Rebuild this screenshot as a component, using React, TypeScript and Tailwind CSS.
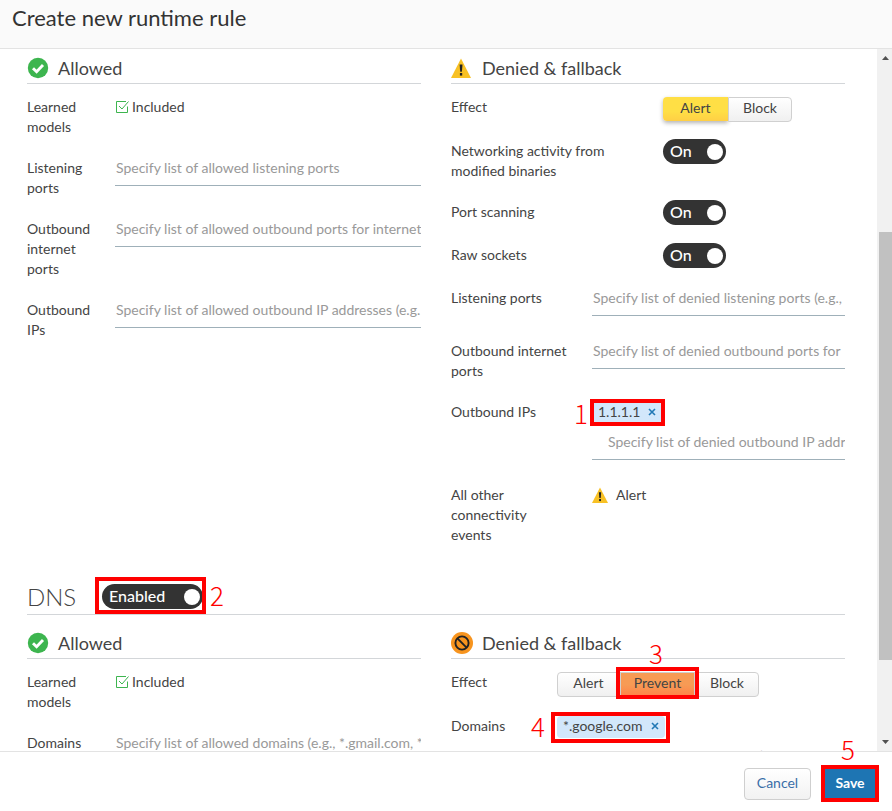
import React, { useId, useState } from "react";

const DIGIT = "pointer-events-none absolute text-[26px] leading-[30px] font-light text-[#ff0000] font-['Noto_Sans_CJK_KR',sans-serif]";

function Callout({ n, box, digit }: { n: number; box: string; digit: string }) {
  return (
    <>
      <span className={`pointer-events-none absolute z-10 border-4 border-[#ff0000] ${box}`} />
      <span className={`${DIGIT} z-10 ${digit}`}>{n}</span>
    </>
  );
}

function CheckCircle() {
  return (
    <svg viewBox="0 0 22 22" className="size-[22px]" aria-hidden="true">
      <circle cx="11" cy="11" r="10.2" fill="#3db54f" />
      <path d="M6 11.2l3.6 3.5 6.4-6.6" fill="none" stroke="#fff" strokeWidth="2.9" />
    </svg>
  );
}

function Warning({ className }: { className: string }) {
  return (
    <svg viewBox="0 0 20 20" className={className} aria-hidden="true">
      <path d="M10 0.5L20 20H0z" fill="#f8c125" />
      <path d="M8.6 6.5h2.9l-.6 7.2H9.2z" fill="#222" />
      <rect x="8.9" y="15" width="2.3" height="2.6" fill="#222" />
    </svg>
  );
}

function Prohibited() {
  return (
    <svg viewBox="0 0 22 22" className="size-[22px]" aria-hidden="true">
      <circle cx="11" cy="11" r="11" fill="#f7941e" />
      <circle cx="11" cy="11" r="6.6" fill="none" stroke="#222" strokeWidth="1.9" />
      <path d="M6.4 6.4l9.2 9.2" stroke="#222" strokeWidth="1.9" />
    </svg>
  );
}

function Included() {
  return (
    <div className="flex h-5 items-center gap-[3px]">
      <svg viewBox="0 0 14 14" className="size-[14px]" fill="none" stroke="#3db54f" aria-hidden="true">
        <path d="M11 1.5H1.5v11h11V6.500" />
        <path d="M4 6l3 3 6.500-7.500" />
      </svg>
      <span>Included</span>
    </div>
  );
}

function ColumnHeader({ icon, children }: { icon: React.ReactNode; children: React.ReactNode }) {
  return (
    <h3 className="mb-[13px] flex h-[44px] items-center border-b border-[#d3d6d9] pt-3 text-lg leading-6">
      <span className="flex w-[31px]">{icon}</span>
      {children}
    </h3>
  );
}

function Row({ label, width, htmlFor, children }: { label: string; width: string; htmlFor?: string; children: React.ReactNode }) {
  return (
    <div className="flex">
      <div className={`shrink-0 ${width}`}>
        {htmlFor ? <label htmlFor={htmlFor} className="block">{label}</label> : label}
      </div>
      <div className="min-w-0 flex-1">{children}</div>
    </div>
  );
}

const INPUT = "block h-7 w-full border-b border-[#9fb0b9] bg-transparent pb-[9px] leading-5 outline-none placeholder:text-[#999]";

function FieldRow({ label, width, placeholder }: { label: string; width: string; placeholder: string }) {
  const id = useId();
  return (
    <Row label={label} width={width} htmlFor={id}>
      <div className="h-8">
        <input id={id} type="text" placeholder={placeholder} className={`${INPUT} pl-px`} />
      </div>
    </Row>
  );
}

function Switch({ text, name, width }: { text: string; name: string; width: string }) {
  const [on, setOn] = useState(true);
  return (
    <button
      type="button"
      role="switch"
      aria-checked={on}
      aria-label={name}
      onClick={() => setOn(!on)}
      className={`flex h-[25px] items-center justify-between rounded-full bg-[#333] pr-[3px] pl-[7px] text-base leading-5 font-medium text-white ${width}`}
    >
      <span className="pb-px">{text}</span>
      <span className="size-4 rounded-full bg-white" />
    </button>
  );
}

function SwitchRow({ label }: { label: string }) {
  return (
    <Row label={label} width="w-[212px] pr-10">
      <div className="-mt-[2px] h-6">
        <Switch text="On" name={label} width="w-[63px]" />
      </div>
    </Row>
  );
}

function Tag({ children }: { children: string }) {
  return (
    <span className="flex h-[22px] items-center gap-2 rounded-sm bg-[#d2e7fb] px-[6px] pb-[3px]">
      {children}
      <button type="button" aria-label={`Remove ${children}`} className="flex">
        <svg viewBox="0 0 8 8" className="size-2" stroke="#2178b5" strokeWidth="1.6" aria-hidden="true">
          <path d="M1 1l6 6M7 1L1 7" />
        </svg>
      </button>
    </span>
  );
}

const SEGMENT = "flex h-[25px] items-center justify-center border border-[#d0d0d0] bg-linear-to-b from-white to-[#f0f0f0] pb-[3px]";

export default function App() {
  const ipsId = useId();
  const domainsId = useId();
  return (
    <div className="flex h-screen flex-col bg-white font-['Lato',sans-serif] text-sm leading-5 text-[#444]">
      <header className="flex h-[49px] shrink-0 items-center border-b border-[#e3e3e3] bg-[#fafafa] px-3 pb-3">
        <h1 className="text-[22px] text-[#333]">Create new runtime rule</h1>
      </header>

      <div className="flex min-h-0 flex-1">
        <main className="min-w-0 flex-1 overflow-hidden pr-8 pl-[27px]">
          <section className="-mt-[9px] grid grid-cols-2 gap-[30px]">
            <div>
              <ColumnHeader icon={<CheckCircle />}>Allowed</ColumnHeader>
              <div className="flex flex-col gap-[21px]">
                <Row label="Learned models" width="w-[88px] pr-4"><Included /></Row>
                <FieldRow label="Listening ports" width="w-[88px] pr-4" placeholder="Specify list of allowed listening ports" />
                <FieldRow label="Outbound internet ports" width="w-[88px] pr-4" placeholder="Specify list of allowed outbound ports for internet" />
                <FieldRow label="Outbound IPs" width="w-[88px] pr-4" placeholder="Specify list of allowed outbound IP addresses (e.g." />
              </div>
            </div>

            <div>
              <ColumnHeader icon={<Warning className="size-5" />}>Denied &amp; fallback</ColumnHeader>
              <div className="flex flex-col gap-[21px]">
                <Row label="Effect" width="w-[212px]">
                  <div className="flex h-[23px]">
                    <button type="button" className="flex h-[24px] w-[65px] items-center justify-center rounded-l bg-linear-to-b from-[#ffdf45] from-60% to-[#ffcf45] pb-[2px] shadow-[0_2px_4px_rgba(0,0,0,0.3)]">Alert</button>
                    <button type="button" className={`${SEGMENT} w-16 rounded-r`}>Block</button>
                  </div>
                </Row>
                <SwitchRow label="Networking activity from modified binaries" />
                <SwitchRow label="Port scanning" />
                <SwitchRow label="Raw sockets" />
                <FieldRow label="Listening ports" width="w-[141px] pr-[22px]" placeholder="Specify list of denied listening ports (e.g.," />
                <FieldRow label="Outbound internet ports" width="w-[141px] pr-[22px]" placeholder="Specify list of denied outbound ports for" />
                <Row label="Outbound IPs" width="w-[141px] pr-[22px]" htmlFor={ipsId}>
                  <div className="flex h-[62px] flex-col">
                    <div className="relative flex h-[30px] w-fit items-start">
                      <Tag>1.1.1.1</Tag>
                      <Callout n={1} box="-top-[3px] -left-[2px] -right-[3px] h-[27px]" digit="-left-[18px] -top-[4px]" />
                    </div>
                    <input id={ipsId} type="text" placeholder="Specify list of denied outbound IP addresses" className={`${INPUT} pl-4`} />
                  </div>
                </Row>
                <Row label="All other connectivity events" width="w-[141px] pr-[22px]">
                  <div className="flex h-5 items-center gap-2">
                    <Warning className="size-4" />
                    Alert
                  </div>
                </Row>
              </div>
            </div>
          </section>

          <section>
            <div className="flex h-[70px] items-center border-b border-[#d3d6d9] pt-[34px]">
              <h2 className="w-[75px] text-2xl leading-8 font-light">DNS</h2>
              <div className="relative">
                <Switch text="Enabled" name="DNS" width="w-[101px]" />
                <Callout n={2} box="-top-[7px] -bottom-[5px] -left-[7px] -right-[3px]" digit="-right-[21px] -top-[4px]" />
              </div>
            </div>
            <div className="grid grid-cols-2 gap-[30px]">
              <div>
                <ColumnHeader icon={<CheckCircle />}>Allowed</ColumnHeader>
                <div className="flex flex-col gap-[21px]">
                  <Row label="Learned models" width="w-[88px] pr-4"><Included /></Row>
                  <FieldRow label="Domains" width="w-[88px] pr-4" placeholder="Specify list of allowed domains (e.g., *.gmail.com, *.google.com)" />
                </div>
              </div>
              <div>
                <ColumnHeader icon={<Prohibited />}>Denied &amp; fallback</ColumnHeader>
                <div className="flex flex-col gap-[21px]">
                  <Row label="Effect" width="w-[106px]">
                    <div className="flex h-[23px]">
                      <button type="button" className={`${SEGMENT} w-[63px] rounded-l`}>Alert</button>
                      <div className="relative">
                        <button type="button" className="flex h-[25px] w-[75px] items-center justify-center border border-[#d0d0d0] bg-linear-to-b from-[#f79b55] from-50% to-[#ff8248] pb-[3px]">Prevent</button>
                        <Callout n={3} box="-inset-x-[4px] -top-[5px] -bottom-[4px]" digit="left-[29px] -top-[34px]" />
                      </div>
                      <button type="button" className={`${SEGMENT} w-16 rounded-r`}>Block</button>
                    </div>
                  </Row>
                  <Row label="Domains" width="w-[106px]" htmlFor={domainsId}>
                    <div className="flex h-[62px] flex-col">
                      <div className="relative flex h-[30px] w-fit items-start">
                        <Tag>*.google.com</Tag>
                        <Callout n={4} box="-top-[4px] -left-[6px] -right-[5px] h-[31px]" digit="-left-[26px] -top-[5px]" />
                      </div>
                      <input id={domainsId} type="text" placeholder="Specify list of denied domains (e.g., *.gmail.com)" className={`${INPUT} pl-4`} />
                    </div>
                  </Row>
                </div>
              </div>
            </div>
          </section>
        </main>

        <div className="flex w-[15px] shrink-0 flex-col items-end bg-[#f1f1f1]" aria-hidden="true">
          <svg viewBox="0 0 13 17" className="h-[17px] w-[13px]"><path d="M3 11l3.500-4 3.500 4z" fill="#505050" /></svg>
          <div className="flex w-[13px] flex-1 flex-col">
            <div className="grow-[166]" />
            <div className="grow-[428] bg-[#c1c1c1]" />
            <div className="grow-[74]" />
          </div>
          <svg viewBox="0 0 13 17" className="h-[17px] w-[13px]"><path d="M3 6l3.500 4 3.500-4z" fill="#505050" /></svg>
        </div>
      </div>

      <footer className="flex h-[60px] shrink-0 items-center justify-end gap-[14px] border-t border-[#e3e3e3] bg-white pt-1 pr-[17px]">
        <button type="button" className="h-8 w-[67px] rounded border border-[#cfcfcf] bg-linear-to-b from-white to-[#f2f2f2] pb-[2px] text-[#3a6ea8]">Cancel</button>
        <div className="relative">
          <button type="button" className="block h-[31px] w-[50px] bg-[#1e75b3] pb-[2px] font-bold text-white">Save</button>
          <Callout n={5} box="-inset-x-[4px] -inset-y-[3px]" digit="left-[16px] -top-[34px]" />
        </div>
      </footer>
    </div>
  );
}
